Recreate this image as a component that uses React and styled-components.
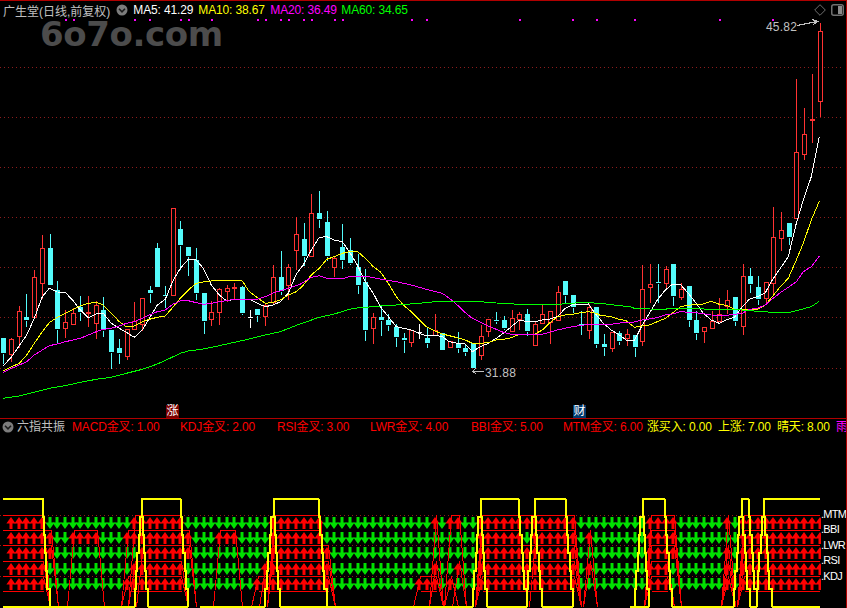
import React from 'react';
import styled, { createGlobalStyle } from 'styled-components';

const GlobalStyle = createGlobalStyle`
  html, body { margin: 0; padding: 0; background: #000; }
`;

const SANS = '"Liberation Sans", "Noto Sans CJK SC", sans-serif';

// candle centre on the page
const cx = (i) => Math.round(3.3 + 7.7 * i) + 0.5;
// price values are kept as 3x offsets from y=200
const py = (v) => Math.round(200 + v / 3) + 0.5;

// high, body top, body bottom, low, kind
const CANDLES = [
  [414, 414, 459, 490, 'c'], [410, 418, 463, 483, 'r'], [315, 334, 408, 440, 'r'], [279, 351, 360, 378, 'c'],
  [207, 232, 350, 355, 'r'], [102, 145, 248, 295, 'r'], [99, 144, 255, 255, 'c'], [240, 270, 387, 430, 'c'],
  [327, 367, 383, 411, 'r'], [320, 340, 372, 372, 'r'], [285, 320, 335, 360, 'c'], [285, 336, 340, 378, 'r'],
  [300, 316, 368, 414, 'r'], [288, 330, 390, 408, 'c'], [390, 390, 456, 503, 'c'], [415, 444, 458, 489, 'c'],
  [388, 388, 467, 477, 'r'], [303, 362, 386, 386, 'r'], [292, 295, 372, 390, 'r'], [255, 270, 279, 306, 'c'],
  [126, 144, 261, 261, 'c'], [255, 286, 289, 321, 'c'], [25, 25, 284, 284, 'r'], [60, 87, 135, 207, 'c'],
  [141, 141, 168, 225, 'c'], [141, 180, 279, 297, 'c'], [279, 279, 363, 399, 'c'], [300, 337, 356, 375, 'r'],
  [262, 268, 337, 372, 'r'], [252, 265, 272, 303, 'r'], [246, 262, 265, 297, 'r'], [255, 261, 339, 342, 'c'],
  [327, 351, 353, 381, 'w'], [327, 327, 345, 363, 'c'], [309, 315, 347, 375, 'r'], [192, 232, 307, 310, 'r'],
  [150, 231, 273, 282, 'c'], [189, 202, 254, 297, 'r'], [48, 103, 151, 207, 'r'],
  [66, 117, 168, 195, 'c'], [-20, 40, 167, 167, 'r'], [-30, 39, 57, 81, 'c'], [30, 66, 168, 180, 'c'],
  [168, 175, 202, 229, 'r'], [69, 141, 180, 204, 'c'], [111, 150, 189, 192, 'c'], [160, 201, 255, 279, 'c'],
  [204, 246, 390, 420, 'c'], [336, 351, 384, 429, 'r'], [315, 351, 360, 405, 'c'], [339, 360, 375, 390, 'c'],
  [370, 381, 411, 438, 'c'], [396, 414, 419, 456, 'c'], [387, 390, 426, 438, 'r'], [369, 396, 398, 414, 'w'],
  [381, 414, 429, 441, 'c'], [339, 390, 404, 404, 'r'], [396, 399, 450, 450, 'c'], [420, 423, 441, 441, 'r'],
  [393, 429, 444, 456, 'c'], [429, 444, 456, 465, 'c'], [429, 429, 504, 504, 'c'], [372, 408, 465, 477, 'r'],
  [354, 357, 393, 408, 'r'], [333, 360, 362, 369, 'c'], [345, 360, 384, 387, 'c'], [327, 354, 393, 393, 'r'],
  [333, 342, 358, 387, 'r'], [324, 342, 393, 405, 'c'], [363, 372, 435, 435, 'r'], [309, 342, 369, 369, 'r'],
  [333, 333, 366, 429, 'r'], [255, 276, 360, 360, 'r'], [243, 243, 285, 309, 'c'], [285, 285, 321, 336, 'c'],
  [330, 372, 373, 402, 'c'], [309, 321, 391, 414, 'r'], [321, 321, 432, 441, 'c'],
  [399, 432, 441, 465, 'c'], [396, 396, 444, 453, 'r'], [390, 399, 423, 432, 'c'], [384, 402, 414, 435, 'r'],
  [405, 405, 441, 468, 'c'], [192, 267, 423, 435, 'r'], [189, 253, 260, 306, 'r'], [189, 246, 248, 306, 'c'],
  [195, 207, 249, 264, 'r'], [192, 192, 288, 315, 'c'], [246, 267, 291, 297, 'r'], [258, 258, 360, 378, 'c'],
  [330, 360, 399, 417, 'c'], [378, 381, 393, 426, 'r'], [330, 363, 384, 384, 'r'], [291, 342, 363, 363, 'r'],
  [267, 300, 318, 339, 'r'], [291, 291, 363, 375, 'c'], [189, 228, 378, 402, 'r'], [201, 228, 252, 276, 'c'],
  [225, 261, 297, 312, 'c'], [246, 246, 294, 309, 'r'], [18, 111, 249, 282, 'r'], [33, 90, 114, 150, 'r'],
  [66, 69, 111, 132, 'c'], [-366, -144, 53, 53, 'r'], [-279, -198, -138, -123, 'r'], [-381, -243, -241, -174, 'r'],
  [-534, -507, -297, -252, 'r'],
];

const CANDLE_COLORS = { r: '#ff3232', c: '#54fcfc', w: '#ffffff' };

// moving averages: three traced pieces, each starting at its own x origin
const traced = (pieces) =>
  pieces
    .flatMap(([ox, pts]) => pts.map(([x, y]) => `${(ox + x / 3).toFixed(1)},${(200 + y / 3).toFixed(1)}`))
    .join(' ');

const MA_LINES = [
  {
    color: '#ffffff',
    pieces: [
      [0, [[10, 497], [35, 470], [58, 437], [80, 405], [103, 355], [127, 290], [148, 265], [172, 276], [196, 277], [220, 303], [241, 330], [265, 353], [289, 342], [310, 340], [334, 370], [358, 385], [379, 397], [403, 412], [427, 390], [448, 355], [472, 315], [496, 298], [520, 240], [541, 205], [565, 178], [589, 180], [610, 205], [634, 255], [658, 285], [680, 303], [703, 297], [748, 297], [772, 310], [796, 320], [820, 315], [841, 305], [865, 280], [889, 222]]],
      [300, [[0, 208], [10, 195], [34, 150], [58, 112], [80, 110], [103, 120], [127, 125], [148, 155], [172, 195], [196, 245], [220, 280], [241, 320], [265, 350], [289, 380], [310, 385], [334, 390], [358, 400], [379, 407], [403, 405], [427, 410], [448, 425], [472, 430], [496, 432], [517, 455], [541, 440], [565, 430], [589, 415], [610, 400], [634, 380], [658, 360], [680, 365], [703, 365], [727, 360], [748, 358], [772, 350], [796, 325], [817, 315], [841, 313], [865, 312], [889, 345]]],
      [600, [[0, 358], [10, 370], [34, 390], [58, 405], [79, 420], [103, 422], [127, 375], [148, 340], [172, 300], [196, 270], [217, 253], [241, 253], [265, 280], [289, 310], [310, 340], [334, 360], [358, 370], [379, 360], [403, 352], [427, 320], [448, 298], [472, 290], [496, 278], [517, 240], [541, 205], [565, 170], [589, 70], [610, 0], [634, -70], [658, -190]]],
    ],
  },
  {
    color: '#ffff00',
    pieces: [
      [0, [[10, 512], [35, 500], [58, 490], [80, 465], [103, 430], [127, 395], [148, 368], [172, 352], [196, 340], [220, 328], [241, 318], [265, 310], [289, 307], [310, 315], [334, 340], [358, 365], [379, 380], [403, 378], [427, 365], [448, 358], [472, 352], [496, 348], [520, 320], [541, 295], [565, 270], [589, 250], [610, 246], [634, 243], [658, 241], [703, 241], [727, 243], [748, 275], [772, 293], [796, 310], [820, 307], [841, 300], [865, 285], [889, 275]]],
      [300, [[0, 265], [10, 255], [34, 225], [58, 205], [80, 178], [103, 170], [127, 160], [148, 155], [172, 154], [196, 175], [220, 200], [241, 215], [265, 250], [289, 290], [310, 315], [334, 335], [358, 360], [379, 380], [403, 392], [427, 402], [448, 407], [472, 413], [496, 420], [517, 430], [541, 430], [565, 428], [589, 420], [610, 418], [634, 413], [658, 403], [703, 403], [727, 390], [748, 370], [772, 350], [796, 345], [817, 343], [841, 338], [865, 335], [889, 340]]],
      [600, [[0, 346], [34, 350], [58, 358], [79, 362], [103, 382], [127, 378], [148, 375], [172, 365], [196, 355], [217, 340], [241, 320], [265, 316], [289, 313], [310, 312], [334, 304], [358, 313], [379, 316], [403, 328], [448, 330], [472, 328], [496, 315], [517, 290], [541, 260], [565, 235], [589, 180], [610, 130], [634, 60], [658, 4]]],
    ],
  },
  {
    color: '#ff00ff',
    pieces: [
      [0, [[10, 517], [35, 505], [58, 495], [80, 485], [103, 465], [127, 450], [148, 437], [172, 432], [196, 425], [220, 420], [241, 415], [265, 405], [289, 395], [310, 388], [334, 385], [358, 378], [379, 370], [403, 365], [427, 355], [448, 345], [472, 335], [496, 330], [520, 312], [541, 303], [565, 302], [589, 308], [610, 313], [634, 310], [658, 305], [680, 302], [703, 298], [772, 298], [796, 290], [820, 278], [841, 273], [865, 265], [889, 257]]],
      [300, [[0, 253], [34, 232], [58, 227], [80, 235], [127, 237], [148, 230], [196, 228], [241, 237], [289, 245], [334, 255], [379, 268], [427, 280], [448, 295], [472, 315], [496, 338], [517, 355], [541, 367], [565, 378], [589, 388], [610, 397], [634, 403], [727, 403], [748, 397], [772, 390], [817, 380], [865, 373]]],
      [600, [[0, 373], [40, 372], [79, 366], [103, 366], [127, 360], [172, 353], [196, 345], [217, 342], [241, 335], [289, 338], [334, 345], [379, 346], [427, 340], [448, 328], [472, 325], [496, 315], [517, 297], [541, 278], [565, 262], [589, 245], [610, 215], [634, 200], [658, 168]]],
    ],
  },
  {
    color: '#00ff00',
    pieces: [
      [0, [[10, 595], [58, 588], [103, 577], [148, 565], [196, 557], [241, 547], [289, 538], [334, 532], [379, 520], [427, 508], [472, 492], [520, 470], [541, 460], [565, 453], [610, 447], [658, 437], [703, 427], [748, 417], [796, 405], [841, 395]]],
      [300, [[0, 372], [58, 352], [103, 342], [148, 328], [172, 324], [241, 318], [289, 315], [358, 310], [427, 303], [517, 303], [589, 309], [658, 313], [772, 313], [817, 310], [841, 307]]],
      [600, [[0, 310], [48, 316], [90, 320], [103, 325], [172, 328], [265, 325], [334, 328], [427, 330], [472, 334], [517, 337], [565, 338], [589, 332], [634, 320], [658, 304]]],
    ],
  },
];

const GRID_Y = [67, 117, 167, 217, 267, 317, 368];
const TOP_DOTS = [65, 73, 134, 149, 180, 188, 211, 257, 265, 280, 288, 303, 311, 334, 342, 411, 426, 519, 572, 596, 634, 719, 772];

// arrow rows of the lower panel: y of the row line, candle ranges that are "on"
const SIGNALS = [
  { name: 'MTM', y: 515, on: [[1, 5], [17, 23], [35, 41], [56, 56], [58, 59], [62, 74], [84, 87], [94, 94], [96, 106]] },
  { name: 'BBI', y: 530, on: [[1, 6], [9, 12], [16, 24], [28, 30], [35, 41], [62, 67], [69, 74], [76, 76], [84, 87], [96, 106]] },
  { name: 'LWR', y: 545, on: [[1, 6], [18, 24], [35, 42], [62, 74], [84, 87], [94, 94], [96, 106]] },
  { name: 'RSI', y: 561, on: [[1, 5], [17, 23], [34, 42], [56, 56], [59, 59], [62, 74], [76, 76], [84, 86], [94, 94], [96, 106]] },
  { name: 'KDJ', y: 576, on: [[1, 5], [16, 23], [33, 42], [54, 56], [58, 58], [62, 74], [84, 86], [94, 94], [96, 106]] },
];

const TOP_Y = 499;
const BOTTOM_Y = 607;

// rise start, top start, drop end, top end, fall end
const SWINGS = [
  [135, 142, 148, 181, 188],
  [265, 274, 280, 319, 327],
  [473, 481, 487, 519, 527],
  [527, 535, 542, 566, 573],
  [635, 643, 649, 665, 672],
  [734, 742, 750, 749, 757],
  [757, 764, 772, 820, null],
];
const FLOOR = [[3, 135], [148, 188], [200, 265], [280, 473], [487, 527], [542, 573], [630, 649], [672, 734], [750, 757], [772, 820]];

const stairs = (x0, y0, x1, y1) => {
  const pts = [[x0, y0]];
  for (let k = 1; k < 6; k++) {
    const y = y0 + ((y1 - y0) * k) / 6;
    const x = x0 + ((x1 - x0) * k) / 6;
    pts.push([pts[pts.length - 1][0], y], [x, y]);
  }
  pts.push([x1, pts[pts.length - 1][1]], [x1, y1]);
  return pts.map((p) => p.join(',')).join(' ');
};

const Page = styled.div`
  width: 846px;
  height: 607px;
  display: flex;
  flex-direction: column;
  background: #000;
  border-top: 1px solid #b00000;
  border-right: 1px solid #b00000;
  font-family: ${SANS};
  font-size: 12px;
  overflow: hidden;
`;

const PricePanel = styled.section`
  position: relative;
  height: 417px;
  flex: none;
  border-bottom: 1px solid #b00000;
`;

const ChartSvg = styled.svg`
  display: block;
  shape-rendering: crispEdges;
`;

const Legend = styled.div`
  position: absolute;
  top: 0;
  left: 3px;
  right: 2px;
  height: 18px;
  display: flex;
  align-items: center;
`;

const Title = styled.span`
  color: #c0c0c0;
  white-space: nowrap;
`;

const Collapse = styled.svg`
  flex: none;
  display: block;
  margin: ${(p) => p.$margin};
`;

const Series = styled.span`
  flex: none;
  width: ${(p) => p.$w}px;
  color: ${(p) => p.$color};
  white-space: nowrap;
  letter-spacing: -0.15px;
`;

const Tools = styled.div`
  margin-left: auto;
  display: flex;
  align-items: center;
  gap: 5px;
`;

const Watermark = styled.div`
  position: absolute;
  left: 40px;
  top: 19px;
  font-family: "DejaVu Sans", sans-serif;
  font-weight: 700;
  font-size: 34px;
  letter-spacing: -0.4px;
  line-height: 28px;
  color: #4c4c4c;
`;

const PriceTag = styled.span`
  position: absolute;
  left: ${(p) => p.$x}px;
  top: ${(p) => p.$y}px;
  color: #c0c0c0;
  line-height: 14px;
  letter-spacing: 0.2px;
`;

const EventMark = styled.span`
  position: absolute;
  left: ${(p) => p.$x}px;
  bottom: 0;
  width: 13px;
  height: 13px;
  line-height: 13px;
  text-align: center;
  color: #fff;
  background: ${(p) => p.$bg};
`;

const IndicatorPanel = styled.section`
  flex: 1;
  min-height: 0;
  display: flex;
  flex-direction: column;
`;

const IndicatorLegend = styled.div`
  height: 18px;
  flex: none;
  display: flex;
  align-items: flex-start;
  line-height: 16px;
  padding-left: 2px;
  white-space: nowrap;
`;

const IndicatorName = styled.span`
  flex: none;
  width: 55px;
  color: #c0c0c0;
`;

const IndicatorBody = styled.div`
  flex: 1;
  min-height: 0;
  display: flex;
`;

const RowLabels = styled.div`
  flex: 1;
  min-width: 0;
  overflow: hidden;
  padding-top: 70px;
  color: #fff;
  font-size: 11px;
  letter-spacing: -0.7px;
`;

const RowLabel = styled.div`
  height: 15.4px;
  line-height: 15.4px;
  white-space: nowrap;
`;

const ChevronIcon = ({ margin }) => (
  <Collapse $margin={margin} width="12" height="12" viewBox="0 0 12 12">
    <circle cx="6" cy="6" r="5.5" fill="#7c7c7c" />
    <path d="M3 4.8 L6 7.8 L9 4.8" fill="none" stroke="#1c1c1c" strokeWidth="1.6" />
  </Collapse>
);

const Candle = ({ i, high, top, bottom, low, kind }) => {
  const x = cx(i);
  const color = CANDLE_COLORS[kind];
  const yTop = py(top);
  const yBottom = py(bottom);
  return (
    <g>
      <line x1={x} x2={x} y1={py(high)} y2={yTop} stroke={color} />
      <line x1={x} x2={x} y1={yBottom} y2={py(low)} stroke={color} />
      {kind === 'r' ? (
        <rect x={x - 2} y={yTop} width={4} height={Math.max(yBottom - yTop, 1)} fill="#000" stroke={color} />
      ) : (
        <rect x={x - 2.5} y={yTop - 0.5} width={5} height={Math.max(yBottom - yTop, 1)} fill={color} />
      )}
    </g>
  );
};

const PriceChart = () => (
  <ChartSvg width="846" height="417" viewBox="0 1 846 417">
    {GRID_Y.map((y) => (
      <line key={y} x1="0" x2="842" y1={y + 0.5} y2={y + 0.5} stroke="#8c1c1c" strokeDasharray="1 3" />
    ))}
    {TOP_DOTS.map((x) => (
      <rect key={x} x={x} y="19" width="2" height="2" fill="#ff00ff" />
    ))}
    {CANDLES.map(([high, top, bottom, low, kind], i) => (
      <Candle key={i} i={i} high={high} top={top} bottom={bottom} low={low} kind={kind} />
    ))}
    {MA_LINES.map((line) => (
      <polyline key={line.color} points={traced(line.pieces)} fill="none" stroke={line.color} />
    ))}
    <path d="M797 25.5 L817 21.5 M812 19.5 L818 21.5 L813 24.5" fill="none" stroke="#c0c0c0" />
    <path d="M484 371.5 L473 371.5 M476 368 L473 371.5 L476 374" fill="none" stroke="#c0c0c0" />
  </ChartSvg>
);

const Arrow = ({ x, y, up }) => {
  const tip = up ? y : y + 12;
  const dir = up ? 1 : -1;
  const neck = tip + dir * 6.5;
  const tail = tip + dir * 12;
  return (
    <path
      shapeRendering="geometricPrecision"
      d={`M${x} ${tip} L${x + 4.6} ${neck} L${x + 1.5} ${neck} L${x + 1.5} ${tail} L${x - 1.5} ${tail} L${x - 1.5} ${neck} L${x - 4.6} ${neck} Z`}
      fill={up ? '#ff0000' : '#00e000'}
    />
  );
};

const inRuns = (runs, i) => runs.some(([a, b]) => i >= a && i <= b);

// left end of a run's outline; the first run starts at the panel edge
const runStart = (a) => (a === 1 ? 3 : cx(a) + 1);
const runEnd = (b) => Math.min(cx(b) + 1, 820);

const IndicatorChart = () => (
  <ChartSvg width="821" height="171" viewBox="0 437 821 171">
    {[515, 545, 576].map((y) => (
      <line key={y} x1="0" x2="820" y1={y + 0.5} y2={y + 0.5} stroke="#8c1c1c" strokeDasharray="1 3" />
    ))}
    {SIGNALS.map((row) =>
      CANDLES.map((_, i) =>
        i > 0 ? <Arrow key={`${row.name}${i}`} x={cx(i) - 0.5} y={row.y + 2} up={inRuns(row.on, i)} /> : null
      )
    )}
    {SIGNALS.map((row) =>
      row.on.map(([a, b]) => (
        <polyline
          key={`${row.name}${a}`}
          points={`${a === 1 ? 3 : runStart(a) - 7},${a === 1 ? row.y + 0.5 : BOTTOM_Y} ${runStart(a)},${row.y + 0.5} ${runEnd(b)},${row.y + 0.5} ${Math.min(runEnd(b) + 7, 820)},${b === 106 ? row.y + 0.5 : BOTTOM_Y}`}
          fill="none"
          stroke="#ff0000"
        />
      ))
    )}
    {SIGNALS[4].on.map(([a, b]) => (
      <line key={a} x1={runStart(a)} x2={runEnd(b)} y1="591.5" y2="591.5" stroke="#ff0000" />
    ))}
    <g fill="none" stroke="#ffff00" strokeWidth="2">
      <polyline points={`3,${TOP_Y} 43,${TOP_Y} ${stairs(43, TOP_Y, 49.5, BOTTOM_Y)}`} />
      {FLOOR.map(([a, b]) => (
        <line key={a} x1={a} x2={b} y1={BOTTOM_Y} y2={BOTTOM_Y} />
      ))}
      {SWINGS.map(([rise, top, drop, end, fall]) => (
        <g key={rise}>
          <polyline points={`${stairs(rise, BOTTOM_Y, top, TOP_Y)} ${end},${TOP_Y}`} />
          <polyline points={stairs(top, TOP_Y, drop, BOTTOM_Y)} />
          {fall && <polyline points={stairs(end, TOP_Y, fall, BOTTOM_Y)} />}
        </g>
      ))}
    </g>
  </ChartSvg>
);

const READOUTS = [
  { label: 'MACD金叉: 1.00', w: 108, color: '#ff0000' },
  { label: 'KDJ金叉: 2.00', w: 97, color: '#ff0000' },
  { label: 'RSI金叉: 3.00', w: 93, color: '#ff0000' },
  { label: 'LWR金叉: 4.00', w: 101, color: '#ff0000' },
  { label: 'BBI金叉: 5.00', w: 92, color: '#ff0000' },
  { label: 'MTM金叉: 6.00', w: 84, color: '#ff0000' },
  { label: '涨买入: 0.00', w: 71, color: '#ffff00' },
  { label: '上涨: 7.00', w: 59, color: '#ffff00' },
  { label: '晴天: 8.00', w: 59, color: '#ffff00' },
  { label: '雨', w: 12, color: '#ff00ff' },
];

export default function App() {
  return (
    <>
      <GlobalStyle />
      <Page>
        <PricePanel>
          <PriceChart />
          <Watermark>6o7o.com</Watermark>
          <Legend>
            <Title>广生堂(日线,前复权)</Title>
            <ChevronIcon margin="0 5px 0 6px" />
            <Series $w={65} $color="#ffffff">MA5: 41.29</Series>
            <Series $w={72} $color="#ffff00">MA10: 38.67</Series>
            <Series $w={71} $color="#ff00ff">MA20: 36.49</Series>
            <Series $w={72} $color="#00ff00">MA60: 34.65</Series>
            <Tools>
              <svg width="12" height="12" viewBox="0 0 12 12">
                <path d="M6 .7 L11.3 6 L6 11.3 L.7 6 Z" fill="none" stroke="#6e6e6e" />
              </svg>
              <svg width="13" height="12" viewBox="0 0 13 12">
                <rect x=".75" y=".75" width="11.5" height="10.5" rx="2" fill="none" stroke="#707070" strokeWidth="1.5" />
                <rect x="7" y="2" width="4" height="8" fill="#8a8a8a" />
              </svg>
            </Tools>
          </Legend>
          <PriceTag $x={766} $y={19}>45.82</PriceTag>
          <PriceTag $x={485} $y={365}>31.88</PriceTag>
          <EventMark $x={166} $bg="#7a0000">涨</EventMark>
          <EventMark $x={573} $bg="#003a6e">财</EventMark>
        </PricePanel>
        <IndicatorPanel>
          <IndicatorLegend>
            <ChevronIcon margin="2px 3px 0 0" />
            <IndicatorName>六指共振</IndicatorName>
            {READOUTS.map((item) => (
              <Series key={item.label} $w={item.w} $color={item.color}>{item.label}</Series>
            ))}
          </IndicatorLegend>
          <IndicatorBody>
            <IndicatorChart />
            <RowLabels>
              {SIGNALS.map((row) => (
                <RowLabel key={row.name}>.{row.name}</RowLabel>
              ))}
            </RowLabels>
          </IndicatorBody>
        </IndicatorPanel>
      </Page>
    </>
  );
}
